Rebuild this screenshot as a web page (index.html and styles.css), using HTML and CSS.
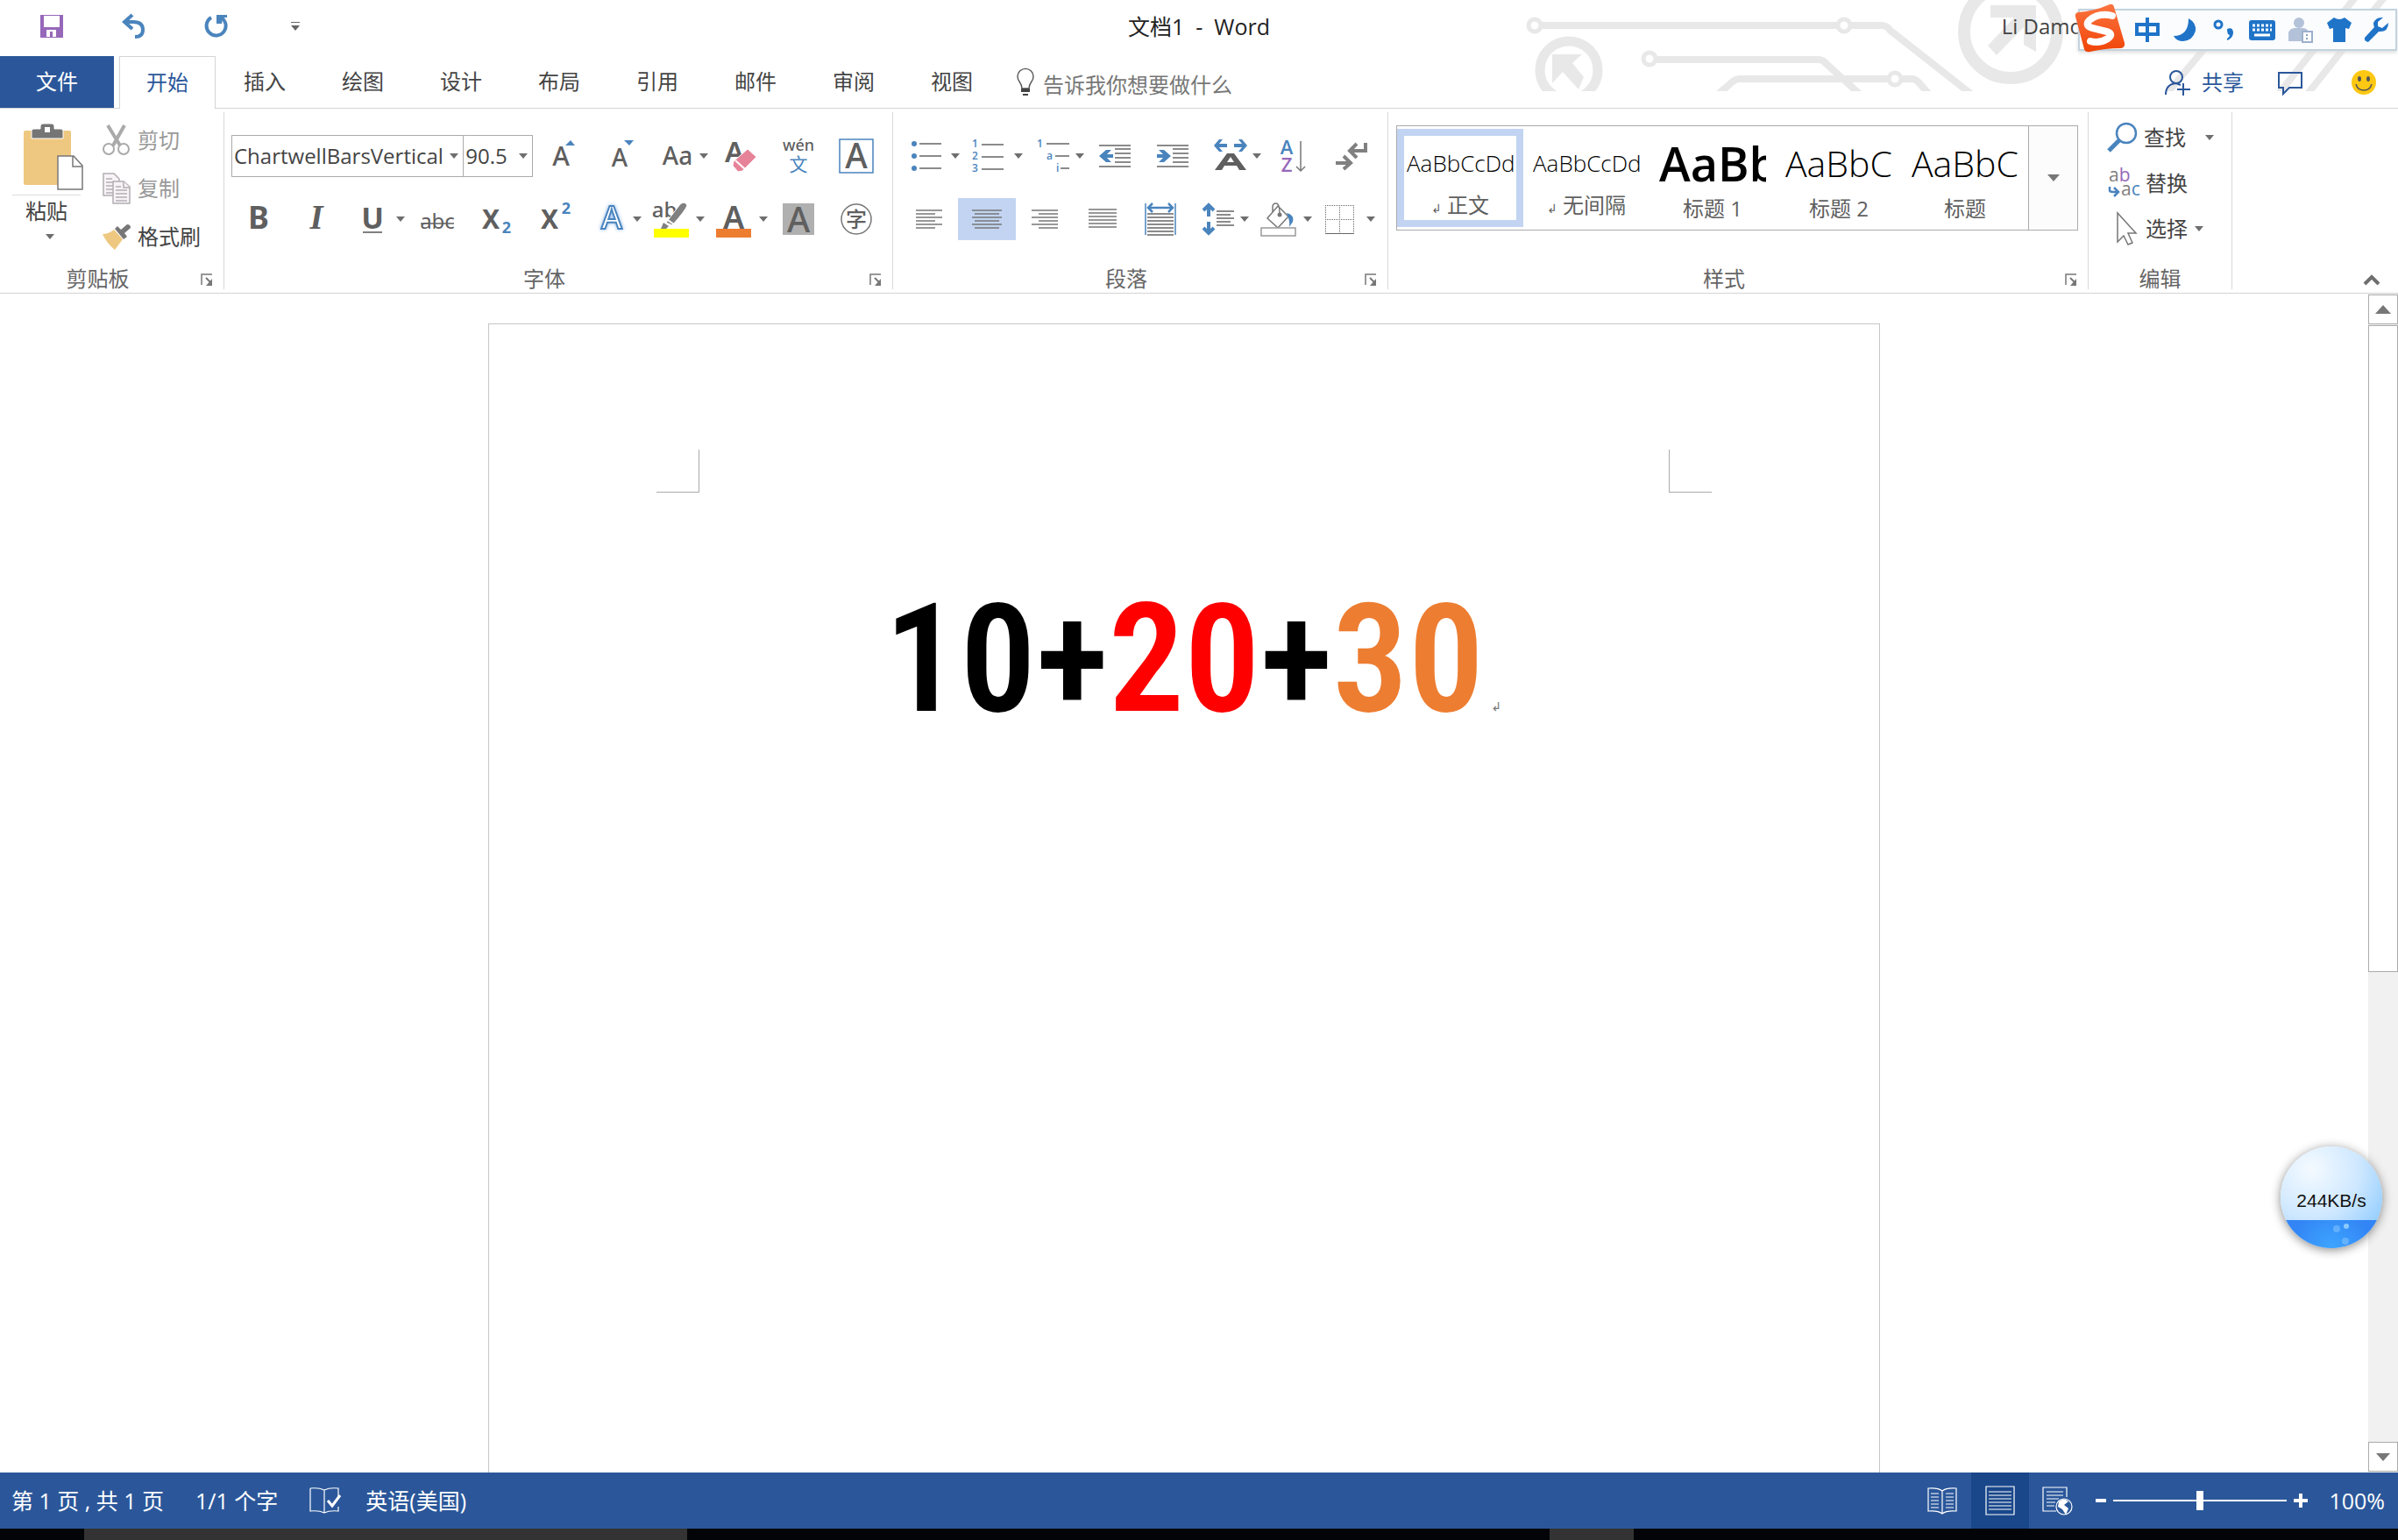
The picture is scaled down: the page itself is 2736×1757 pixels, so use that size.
FILE: index.html
```html
<!DOCTYPE html>
<html lang="zh-CN">
<head>
    <meta charset="UTF-8">
    <meta name="viewport" content="width=device-width, initial-scale=1.0">
    <title>文档1 - Word</title>
    <link rel="stylesheet" href="styles.css">
</head>
<body>
    <svg class="symbols" aria-hidden="true">
        <symbol id="down" viewBox="0 0 10 6"><path d="M0 0h10L5 6z" fill="#6e6e6e"/></symbol>
        <symbol id="launch" viewBox="0 0 14 14"><path d="M1 13V1h12" fill="none" stroke="#777" stroke-width="1.5"/><path d="M6 5l5 5" stroke="#777" stroke-width="2"/><path d="M13 6v8H6z" fill="#777"/></symbol>
    </svg>

    <header class="top">
        <svg class="circuit" width="1036" height="104" viewBox="1700 0 1036 104" aria-hidden="true">
            <g fill="none" stroke="#e8e8e8" stroke-width="8">
                <path d="M1758 29h338M2111 29h36q6 0 10 6l98 77"/>
                <circle cx="1751" cy="29" r="7" stroke-width="5"/>
                <circle cx="2104" cy="29" r="7" stroke-width="5"/>
                <path d="M1889 68h186q5 0 9 5l44 40M1955 112l22-19q4-3 8-3h169M2169 90h12q5 0 8 4l16 18"/>
                <circle cx="1882" cy="67" r="7" stroke-width="5"/>
                <circle cx="2162" cy="90" r="7" stroke-width="5"/>
                <circle cx="1790" cy="80" r="33" stroke-width="11"/>
                <circle cx="2294" cy="36" r="53" stroke-width="14"/>
                <path d="M2518 52l-50 60M2688-4l-92 116M2721-4l-92 116"/>
            </g>
            <path d="M1771 62h34l-11 10 13 16-6 14-18-20-12 13z" fill="#e8e8e8"/>
            <path d="M2271 6h52v53l-14-8V31l-31 32-10-11 30-32h-27z" fill="#e8e8e8"/>
        </svg>

        <div class="titlebar">
            <div class="quick">
                <button class="plain" aria-label="保存"><svg width="26" height="26" viewBox="0 0 26 26"><path d="M0 0h26v26H0z" fill="#9668b9"/><path d="M4 1h18v13H4zM7 17h11v8h-4v-6h-3v6H7z" fill="#fff"/></svg></button>
                <button class="plain" aria-label="撤消"><svg width="28" height="28" viewBox="0 0 28 28"><path d="M13 1L4 9l9 8M5 9h9q11 0 11 9 0 8-9 8" fill="none" stroke="#4a84bd" stroke-width="4"/></svg></button>
                <button class="plain" aria-label="重复"><svg width="28" height="28" viewBox="0 0 28 28"><path d="M9 4a11 11 0 1 0 9-1" fill="none" stroke="#4a84bd" stroke-width="4"/><path d="M15 1h12v3h-5l-1 7h-6z" fill="#4a84bd"/></svg></button>
                <button class="plain customize" aria-label="自定义快速访问工具栏"><svg width="10" height="10" viewBox="0 0 10 10"><path d="M0 0h10v1H0zM0 4h10L5 10z" fill="#666"/></svg></button>
            </div>
            <h1 class="title">文档1&nbsp; -&nbsp; Word</h1>
            <span class="user">Li Damo</span>
        </div>

        <nav class="tabs">
            <button class="tab file">文件</button>
            <button class="tab active">开始</button>
            <button class="tab">插入</button>
            <button class="tab">绘图</button>
            <button class="tab">设计</button>
            <button class="tab">布局</button>
            <button class="tab">引用</button>
            <button class="tab">邮件</button>
            <button class="tab">审阅</button>
            <button class="tab">视图</button>
            <label class="tell">
                <svg width="20" height="30" viewBox="0 0 20 30"><path d="M6 22q0-4-3-8a9 9 0 1 1 14 0q-3 4-3 8z" fill="none" stroke="#555" stroke-width="1.4"/><path d="M5 22h10v4H5zM7 28h6v2H7z" fill="#444"/></svg>
                <input type="text" placeholder="告诉我你想要做什么" aria-label="告诉我你想要做什么">
            </label>
            <div class="account">
                <button class="plain share"><svg width="30" height="30" viewBox="0 0 30 30"><g fill="none" stroke="#2b579a" stroke-width="2"><circle cx="13" cy="9" r="7"/><path d="M1 29q0-12 12-13l5 2M21 16v14M14 23h15"/></g></svg>共享</button>
                <button class="plain" aria-label="批注"><svg width="28" height="28" viewBox="0 0 28 28"><path d="M1 3h26v17H13l-7 7v-7H1z" fill="none" stroke="#2b579a" stroke-width="2"/></svg></button>
                <button class="plain" aria-label="反馈"><svg width="28" height="28" viewBox="0 0 28 28"><circle cx="14" cy="14" r="14" fill="#fdc813"/><ellipse cx="9" cy="10" rx="2" ry="3" fill="#555"/><ellipse cx="19" cy="10" rx="2" ry="3" fill="#555"/><path d="M5 16q2 7 9 7t9-7" fill="none" stroke="#555" stroke-width="1.5"/></svg></button>
            </div>
        </nav>

        <div class="ime">
            <svg class="ime-logo" width="58" height="56" viewBox="0 0 58 56"><defs><linearGradient id="fire" x1="0" y1="0" x2="0" y2="1"><stop offset="0" stop-color="#fb7440"/><stop offset="1" stop-color="#f04508"/></linearGradient></defs><path d="M4 10Q22 9 40 1q4-1 5 3l12 41q1 5-4 6-18 0-35 4-6 1-7-3L1 15q-1-4 3-5z" fill="url(#fire)"/><path d="M43 14Q28 10 17 19q-6 6 3 9l17 4q8 3 1 8-10 6-20 3" fill="none" stroke="#fff" stroke-width="8" stroke-linecap="round"/></svg>
            <svg width="30" height="30" viewBox="0 0 30 30"><path d="M3 9h24v11H3zM15 1v28" fill="none" stroke="#1f74c8" stroke-width="4"/></svg>
            <svg width="30" height="30" viewBox="0 0 30 30"><path d="M19 2q9 5 8 14-3 11-14 12Q5 28 2 22q17 0 17-20z" fill="#1f74c8"/></svg>
            <svg width="30" height="30" viewBox="0 0 30 30"><circle cx="9" cy="9" r="4" fill="none" stroke="#1f74c8" stroke-width="3"/><path d="M19 14q7-3 7 5-1 6-7 8v-2q3-2 3-4-3 0-3-7z" fill="#1f74c8"/></svg>
            <svg width="32" height="30" viewBox="0 0 32 30"><rect x="1" y="4" width="30" height="23" rx="3" fill="#1f74c8"/><path d="M5 10h22M5 15h22" stroke="#fff" stroke-width="3" stroke-dasharray="3 2"/><path d="M7 21h18" stroke="#fff" stroke-width="3"/></svg>
            <svg width="30" height="30" viewBox="0 0 30 30"><circle cx="13" cy="7" r="6" fill="#b3c2d9"/><path d="M1 28V18q2-5 8-5h8q6 0 7 5v10z" fill="#b3c2d9"/><path d="M17 17h11v12H17z" fill="#fff" stroke="#9cb0cc" stroke-width="2"/><path d="M22 20v2M22 24v2" stroke="#8aa0bf" stroke-width="2"/></svg>
            <svg width="30" height="30" viewBox="0 0 30 30"><path d="M9 1q6 4 12 0l8 6-3 7-4-1v16H8V13l-4 1-3-7z" fill="#1f74c8"/></svg>
            <svg width="30" height="30" viewBox="0 0 30 30"><path d="M28 7l-7 6-5-2 0-5 6-5q-8-1-11 6 0 4 1 5L1 24q-1 4 4 5L17 17q11 1 11-10z" fill="#1f74c8"/></svg>
        </div>
    </header>

    <section class="ribbon">
        <div class="group clipboard">
            <div class="group-body">
                <button class="plain paste">
                    <svg width="68" height="76" viewBox="0 0 68 76"><rect x="0" y="8" width="54" height="62" rx="2" fill="#eec880"/><path d="M9 17V8q0-2 3-2h7V3q0-3 3-3h10q3 0 3 3v3h7q3 0 3 2v9z" fill="#757575" stroke="#fff" stroke-width="1"/><path d="M24 4h6v6h-6z" fill="#fff"/><path d="M39 37h18l10 11v27H39z" fill="#fff" stroke="#777" stroke-width="1.5"/><path d="M56 37v12h11" fill="none" stroke="#777" stroke-width="1.5"/></svg>
                    <span class="paste-label">粘贴</span>
                    <svg width="10" height="6"><use href="#down"/></svg>
                </button>
                <div class="stack">
                    <button class="plain tool off"><svg width="32" height="36" viewBox="0 0 32 36"><path d="M6 1l14 23M25 1L12 24" stroke="#aaa" stroke-width="4"/><circle cx="7" cy="28" r="6" fill="none" stroke="#aaa" stroke-width="2"/><circle cx="24" cy="28" r="6" fill="none" stroke="#aaa" stroke-width="2"/></svg>剪切</button>
                    <button class="plain tool off"><svg width="32" height="36" viewBox="0 0 32 36"><g fill="#f7f3f7" stroke="#b3aeb3" stroke-width="1.5"><path d="M1 1h12l6 6v19H1z"/><path d="M4 7h7M4 11h8M4 15h8M4 19h8M4 23h8"/><path d="M12 10h12l7 6v19H12z"/><path d="M24 10v7h7M15 16h6M15 20h13M15 24h13M15 28h13M15 32h13"/></g></svg>复制</button>
                    <button class="plain tool"><svg width="32" height="36" viewBox="0 0 32 36"><path d="M0 15q7 0 13-5l10 11-9 12Q5 26 0 15z" fill="#eec880"/><path d="M14 9l3-3 4 4 7-6q4 0 4 4l-7 6 3 4-4 3z" fill="#777"/></svg>格式刷</button>
                </div>
            </div>
            <div class="group-foot"><span>剪贴板</span><button class="plain launcher" aria-label="剪贴板选项"><svg width="14" height="14"><use href="#launch"/></svg></button></div>
        </div>

        <div class="group font">
            <div class="rows">
                <div class="row">
                    <div class="combos">
                        <label class="combo family"><select aria-label="字体"><option>ChartwellBarsVertical</option></select><svg width="10" height="6"><use href="#down"/></svg></label>
                        <label class="combo size"><select aria-label="字号"><option>90.5</option></select><svg width="10" height="6"><use href="#down"/></svg></label>
                    </div>
                    <button class="ico" aria-label="增大字号"><svg width="40" height="40" viewBox="0 0 40 40"><text x="19" y="31" class="g" font-size="30" text-anchor="middle">A</text><path d="M24 8h11l-5-6z" fill="#4a84bd"/></svg></button>
                    <button class="ico" aria-label="减小字号"><svg width="40" height="40" viewBox="0 0 40 40"><text x="20" y="32" class="g" font-size="28" text-anchor="middle">A</text><path d="M25 2h11l-5 6z" fill="#4a84bd"/></svg></button>
                    <button class="ico wide" aria-label="更改大小写"><svg width="58" height="40" viewBox="0 0 58 40"><text x="33" y="30" class="g" font-size="28" text-anchor="middle">Aa</text></svg><svg width="10" height="6"><use href="#down"/></svg></button>
                    <button class="ico" aria-label="清除格式"><svg width="40" height="40" viewBox="0 0 40 40"><text x="13" y="27" class="g semi" font-size="33" text-anchor="middle">A</text><path d="M12 26L28 12l10 9-16 16-5 1-6-7z" fill="#e78399" stroke="#fff" stroke-width="1"/><path d="M14 25l11 10" stroke="#fff" stroke-width="2"/></svg></button>
                    <button class="ico" aria-label="拼音指南"><svg width="40" height="40" viewBox="0 0 40 40"><text x="20" y="14" class="g" font-size="18" text-anchor="middle">wén</text><text x="20" y="37" class="b" font-size="21" text-anchor="middle">文</text></svg></button>
                    <button class="ico" aria-label="字符边框"><svg width="40" height="40" viewBox="0 0 40 40"><path d="M1 1h38v38H1z" fill="none" stroke="#4a84bd" stroke-width="1.5"/><text x="20" y="34" class="g" font-size="39" text-anchor="middle">A</text></svg></button>
                </div>
                <div class="row">
                    <button class="ico" aria-label="加粗"><svg width="40" height="40" viewBox="0 0 40 40"><text x="20" y="31" class="g bold" font-size="36" text-anchor="middle">B</text></svg></button>
                    <button class="ico" aria-label="倾斜"><svg width="40" height="40" viewBox="0 0 40 40"><text x="20" y="31" class="g serif" font-size="39" text-anchor="middle">I</text></svg></button>
                    <button class="ico wide" aria-label="下划线"><svg width="58" height="40" viewBox="0 0 58 40"><text x="31" y="31" class="g bold" font-size="34" text-anchor="middle">U</text><path d="M20 35h22" stroke="#555" stroke-width="1.5"/></svg><svg width="10" height="6"><use href="#down"/></svg></button>
                    <button class="ico" aria-label="删除线"><svg width="40" height="40" viewBox="0 0 40 40"><text x="20" y="31" class="g light" font-size="24" text-anchor="middle">abc</text><path d="M1 25h38" stroke="#5f5f5f" stroke-width="1.5"/></svg></button>
                    <button class="ico" aria-label="下标"><svg width="40" height="40" viewBox="0 0 40 40"><text x="15" y="31" class="g bold" font-size="30" text-anchor="middle">X</text><text x="33" y="36" class="b bold" font-size="18" text-anchor="middle">2</text></svg></button>
                    <button class="ico" aria-label="上标"><svg width="40" height="40" viewBox="0 0 40 40"><text x="16" y="31" class="g bold" font-size="30" text-anchor="middle">X</text><text x="35" y="14" class="b bold" font-size="18" text-anchor="middle">2</text></svg></button>
                    <button class="ico wide" aria-label="文本效果"><svg width="58" height="40" viewBox="0 0 58 40"><text x="34" y="31" class="fx" font-size="36" text-anchor="middle">A</text></svg><svg width="10" height="6"><use href="#down"/></svg></button>
                    <button class="ico wide" aria-label="突出显示"><svg width="58" height="40" viewBox="0 0 58 40"><text x="22" y="18" class="g" font-size="24" text-anchor="middle">ab</text><path d="M24 24L40 3q5-4 8 1-1 5-17 23z" fill="#808080" stroke="#fff"/><path d="M26 21l7 5" stroke="#fff" stroke-width="2"/><path d="M21 24l6 4-3 3h-6z" fill="#808080"/><path d="M10 31h40v10H10z" fill="#ff0"/></svg><svg width="10" height="6"><use href="#down"/></svg></button>
                    <button class="ico wide" aria-label="字体颜色"><svg width="58" height="40" viewBox="0 0 58 40"><text x="29" y="31" class="g semi" font-size="36" text-anchor="middle">A</text><path d="M9 31h40v10H9z" fill="#ed7d31"/></svg><svg width="10" height="6"><use href="#down"/></svg></button>
                    <button class="ico" aria-label="字符底纹"><svg width="40" height="40" viewBox="0 0 40 40"><path d="M0 2h36v36H0z" fill="#b0b0b0"/><text x="18" y="35" class="g" font-size="40" text-anchor="middle">A</text></svg></button>
                    <button class="ico" aria-label="带圈字符"><svg width="40" height="40" viewBox="0 0 40 40"><circle cx="18" cy="20" r="17" fill="none" stroke="#777" stroke-width="1.5"/><text x="18" y="29" class="g" font-size="24" text-anchor="middle">字</text></svg></button>
                </div>
            </div>
            <div class="group-foot"><span>字体</span><button class="plain launcher" aria-label="字体选项"><svg width="14" height="14"><use href="#launch"/></svg></button></div>
        </div>

        <div class="group paragraph">
            <div class="rows">
                <div class="row">
                    <button class="ico wide" aria-label="项目符号"><svg width="58" height="40" viewBox="0 0 58 40"><g fill="#4a84bd"><circle cx="16" cy="6" r="3"/><circle cx="16" cy="20" r="3"/><circle cx="16" cy="34" r="3"/></g><path d="M22 6h25M22 20h25M22 34h25" stroke="#666" stroke-width="1.5"/></svg><svg width="10" height="6"><use href="#down"/></svg></button>
                    <button class="ico wide" aria-label="编号"><svg width="58" height="40" viewBox="0 0 58 40"><g class="b semi" font-size="12"><text x="10" y="10">1</text><text x="10" y="24">2</text><text x="10" y="38">3</text></g><path d="M21 7h25M21 21h25M21 35h25" stroke="#666" stroke-width="1.5"/></svg><svg width="10" height="6"><use href="#down"/></svg></button>
                    <button class="ico wide multi" aria-label="多级列表"><svg width="56" height="40" viewBox="0 0 56 40"><g class="b semi" font-size="12"><text x="12" y="10">1</text><text x="23" y="24">a</text><text x="34" y="38">i</text></g><path d="M23 6h26M33 20h16M39 34h10" stroke="#666" stroke-width="1.5"/></svg><svg width="10" height="6"><use href="#down"/></svg></button>
                    <button class="ico" aria-label="减少缩进量"><svg width="40" height="40" viewBox="0 0 40 40"><path d="M2 8h36M20 12h18M20 17h18M20 22h18M20 27h18M2 32h36" stroke="#666" stroke-width="1.5"/><path d="M2 20l8-7h6l-5 5h7v4h-7l5 5h-6z" fill="#4a84bd"/></svg></button>
                    <button class="ico" aria-label="增加缩进量"><svg width="40" height="40" viewBox="0 0 40 40"><path d="M2 8h36M20 12h18M20 17h18M20 22h18M20 27h18M2 32h36" stroke="#666" stroke-width="1.5"/><path d="M18 20l-8-7H4l5 5H2v4h7l-5 5h6z" fill="#4a84bd"/></svg></button>
                    <button class="ico wide" aria-label="中文版式"><svg width="58" height="40" viewBox="0 0 58 40"><path d="M24 1h-4l-6 7 6 7h4l-4-5h9V6h-9zM42 1h4l6 7-6 7h-4l4-5h-9V6h9z" fill="#4a84bd"/><path d="M15 36L29 17h8l14 19h-8l-3-5H26l-3 5zM29 27h8l-4-6z" fill="#5f5f5f"/></svg><svg width="10" height="6"><use href="#down"/></svg></button>
                    <button class="ico" aria-label="排序"><svg width="40" height="40" viewBox="0 0 40 40"><text x="12" y="18" class="b semi" font-size="22" text-anchor="middle">A</text><text x="12" y="38" class="p semi" font-size="22" text-anchor="middle">Z</text><path d="M28 3v34M23 32l5 5 5-5" fill="none" stroke="#777" stroke-width="1.5"/></svg></button>
                    <button class="ico" aria-label="显示编辑标记"><svg width="40" height="40" viewBox="0 0 40 40"><path d="M36 5v9H20M26 6l-8 8 8 8M2 28h16M11 20l8 8-8 7" fill="none" stroke="#808080" stroke-width="4"/></svg></button>
                </div>
                <div class="row">
                    <button class="ico" aria-label="左对齐"><svg width="40" height="40" viewBox="0 0 40 40"><path d="M5 10h30M5 14h22M5 18h30M5 22h22M5 26h30M5 30h22" stroke="#777" stroke-width="1.5"/></svg></button>
                    <button class="ico on" aria-label="居中"><svg width="40" height="40" viewBox="0 0 40 40"><path d="M3 10h34M6 14h28M3 18h34M6 22h28M3 26h34M6 30h28" stroke="#777" stroke-width="1.5"/></svg></button>
                    <button class="ico" aria-label="右对齐"><svg width="40" height="40" viewBox="0 0 40 40"><path d="M5 10h30M13 14h22M5 18h30M13 22h22M5 26h30M13 30h22" stroke="#777" stroke-width="1.5"/></svg></button>
                    <button class="ico" aria-label="两端对齐"><svg width="40" height="40" viewBox="0 0 40 40"><path d="M4 9h32M4 13h32M4 17h32M4 21h32M4 25h32M4 29h32" stroke="#777" stroke-width="1.5"/></svg></button>
                    <button class="ico" aria-label="分散对齐"><svg width="40" height="40" viewBox="0 0 40 40"><path d="M3 2v36M37 2v36" stroke="#4a84bd" stroke-width="1.5"/><path d="M6 7h28M11 2L6 7l5 5M29 2l5 5-5 5" fill="none" stroke="#4a84bd" stroke-width="2.5"/><path d="M5 14h30M5 18h30M5 22h30M5 26h30M5 30h30M5 34h30M5 38h30" stroke="#666" stroke-width="1.5"/></svg></button>
                    <button class="ico wide" aria-label="行距"><svg width="58" height="40" viewBox="0 0 58 40"><path d="M22 4v13M16 10l6-6 6 6M22 23v13M16 30l6 6 6-6" fill="none" stroke="#4a84bd" stroke-width="4"/><path d="M31 11h20M31 15h16M31 19h20M31 23h16M31 27h20" stroke="#666" stroke-width="1.5"/></svg><svg width="10" height="6"><use href="#down"/></svg></button>
                    <button class="ico wide" aria-label="底纹"><svg width="58" height="40" viewBox="0 0 58 40"><path d="M29 5L41 17 29 30 17 19z" fill="#fff" stroke="#777" stroke-width="1.5"/><path d="M23 12V6q0-4 4-4 4 0 4 12" fill="none" stroke="#777" stroke-width="1.5"/><circle cx="31" cy="15" r="2.5" fill="#777"/><path d="M39 13q9 2 7 10l-4 6q1-7-3-16z" fill="#4a84bd"/><path d="M10 30h39v9H10z" fill="#fff" stroke="#999" stroke-width="1.5"/></svg><svg width="10" height="6"><use href="#down"/></svg></button>
                    <button class="ico wide" aria-label="边框"><svg width="58" height="40" viewBox="0 0 58 40"><path d="M11 4.500h34M11 20.500h34M11.500 4v32M27.500 4v32M43.500 4v32" stroke="#666" stroke-width="1" stroke-dasharray="1 1"/><path d="M11 36.500h33" stroke="#666"/></svg><svg width="10" height="6"><use href="#down"/></svg></button>
                </div>
            </div>
            <div class="group-foot"><span>段落</span><button class="plain launcher" aria-label="段落设置"><svg width="14" height="14"><use href="#launch"/></svg></button></div>
        </div>

        <div class="group styles">
            <div class="group-body">
                <div class="gallery">
                    <button class="style chosen"><span class="sample">AaBbCcDd</span><span class="name"><small>↲</small> 正文</span></button>
                    <button class="style"><span class="sample">AaBbCcDd</span><span class="name"><small>↲</small> 无间隔</span></button>
                    <button class="style"><span class="sample h1">AaBb</span><span class="name">标题 1</span></button>
                    <button class="style"><span class="sample h2">AaBbC</span><span class="name">标题 2</span></button>
                    <button class="style"><span class="sample h2">AaBbC</span><span class="name">标题</span></button>
                    <button class="more" aria-label="其他样式"><svg width="14" height="8" viewBox="0 0 10 6" preserveAspectRatio="none"><path d="M0 0h10L5 6z" fill="#777"/></svg></button>
                </div>
            </div>
            <div class="group-foot"><span>样式</span><button class="plain launcher" aria-label="样式窗格"><svg width="14" height="14"><use href="#launch"/></svg></button></div>
        </div>

        <div class="group edit">
            <div class="stack">
                <button class="plain tool find"><svg width="36" height="36" viewBox="0 0 36 36"><circle cx="22" cy="13" r="11" fill="none" stroke="#4a84bd" stroke-width="2.5"/><path d="M14 21L2 33" stroke="#4a84bd" stroke-width="5"/></svg>查找<svg class="far" width="10" height="6"><use href="#down"/></svg></button>
                <button class="plain tool"><svg width="36" height="36" viewBox="0 0 36 36"><text x="2" y="16" class="gray" font-size="21">a<tspan class="p">b</tspan></text><text x="16" y="32" class="gray" font-size="21">a<tspan class="b">c</tspan></text><path d="M3 22v4q0 2 4 2h5M8 23l5 5-5 5" fill="none" stroke="#4a84bd" stroke-width="2.5"/></svg>替换</button>
                <button class="plain tool"><svg width="36" height="38" viewBox="0 0 36 38"><path d="M12 1v33l7-7 5 10 5-2-5-11h9z" fill="#fff" stroke="#777" stroke-width="1.5"/></svg>选择<svg class="near" width="10" height="6"><use href="#down"/></svg></button>
            </div>
            <div class="group-foot"><span>编辑</span></div>
        </div>

        <button class="plain collapse" aria-label="折叠功能区"><svg width="18" height="12" viewBox="0 0 18 12"><path d="M1 11l8-8 8 8" fill="none" stroke="#6e6e6e" stroke-width="4"/></svg></button>
    </section>

    <main class="workspace">
        <div class="canvas">
            <article class="page">
                <div class="margins"><i class="corner left"></i><i class="corner right"></i></div>
                <p class="chart">10+<span class="red">20</span>+<span class="orange">30</span><span class="mark">↲</span></p>
            </article>
        </div>
        <div class="scrollbar">
            <button class="scroll-btn" aria-label="向上滚动"><svg width="18" height="10" viewBox="0 0 18 10"><path d="M0 10h18L9 0z" fill="#777"/></svg></button>
            <div class="track"><div class="thumb"></div></div>
            <button class="scroll-btn" aria-label="向下滚动"><svg width="16" height="9" viewBox="0 0 18 10"><path d="M0 0h18L9 10z" fill="#777"/></svg></button>
        </div>
    </main>

    <div class="speed"><span>244KB/s</span><svg width="116" height="32" viewBox="0 0 116 32"><g fill="#8ccaff"><circle cx="64" cy="10" r="4" opacity=".5"/><circle cx="75" cy="7" r="3"/><circle cx="74" cy="24" r="4" opacity=".5"/></g></svg></div>

    <footer class="status">
        <span class="pages">第 1 页 , 共 1 页</span>
        <span class="words">1/1 个字</span>
        <svg class="proof" width="36" height="30" viewBox="0 0 36 30"><path d="M1 1q10-1 16 2 6-3 16-2v9M33 22v5q-10-1-16 2-6-3-16-2V1M17 3v26" fill="none" stroke="#fff" stroke-width="1.2"/><path d="M21 15l5 6 9-12" fill="none" stroke="#fff" stroke-width="3"/></svg>
        <span>英语(美国)</span>
        <div class="views">
            <button class="view" aria-label="阅读视图"><svg width="34" height="32" viewBox="0 0 34 32"><path d="M1 2q11-1 16 3 5-4 16-3v26q-11-1-16 3-5-4-16-3zM17 5v26M4 8h9M4 12h9M4 16h9M4 20h9M4 24h9M21 8h9M21 12h9M21 16h9M21 20h9M21 24h9" fill="none" stroke="#fff" stroke-width="1.2"/></svg></button>
            <button class="view current" aria-label="页面视图"><svg width="34" height="34" viewBox="0 0 34 34"><path d="M1 1h32v32H1zM4 7h26M4 11h26M4 15h26M4 19h26M4 23h26M4 27h26" fill="none" stroke="#fff" stroke-width="1.2"/></svg></button>
            <button class="view" aria-label="Web 版式视图"><svg width="36" height="34" viewBox="0 0 36 34"><path d="M16 29H1V2h27v11M5 7h19M5 11h19M5 15h14M5 19h10M5 23h9" fill="none" stroke="#fff" stroke-width="1.2"/><circle cx="25" cy="24" r="9" fill="none" stroke="#fff" stroke-width="1.2"/><path d="M19 18q6-5 11 0l-5 4 5 4-3 7-4-6-5-3z" fill="#fff"/></svg></button>
        </div>
        <button class="zoom-btn" aria-label="缩小"><svg width="16" height="16" viewBox="0 0 16 16"><path d="M2 8h12" stroke="#fff" stroke-width="4"/></svg></button>
        <input class="zoom" type="range" min="0" max="100" value="50" aria-label="显示比例">
        <button class="zoom-btn" aria-label="放大"><svg width="16" height="16" viewBox="0 0 16 16"><path d="M0 8h16M8 0v16" stroke="#fff" stroke-width="4"/></svg></button>
        <span class="percent">100%</span>
    </footer>
    <div class="taskbar"><i class="task first"></i><i class="task second"></i></div>
</body>
</html>
```
FILE: styles.css
```css
* {
    box-sizing: border-box;
}
body {
    margin: 0;
    height: 100vh;
    display: flex;
    flex-direction: column;
    overflow: hidden;
    background: #fff;
    color: #444;
    font-family: "Open Sans", "Noto Sans CJK SC", sans-serif;
    font-size: 24px;
    line-height: 32px;
}
button, input, select {
    font: inherit;
    color: inherit;
    margin: 0;
    padding: 0;
    border: 0;
    background: none;
}
svg {
    display: block;
    flex: none;
    overflow: visible;
}
.symbols {
    position: absolute;
    width: 0;
    height: 0;
}
.plain {
    display: flex;
    align-items: center;
}

/* title bar and tabs */
.top {
    position: relative;
    border-bottom: 1px solid #d4d4d4;
}
.circuit {
    position: absolute;
    right: 0;
    top: 0;
    overflow: hidden;
}
.titlebar {
    position: relative;
    height: 64px;
    padding-bottom: 4px;
    display: flex;
    align-items: center;
    justify-content: center;
}
.quick {
    position: absolute;
    left: 46px;
    display: flex;
    align-items: center;
    gap: 66px;
}
.customize {
    margin-left: 6px;
}
.title {
    margin: 0;
    font-size: 25px;
    font-weight: 400;
    color: #222;
}
.user {
    position: absolute;
    right: 360px;
}
.tabs {
    position: relative;
    height: 59px;
    display: flex;
    align-items: stretch;
}
.tab {
    width: 112px;
    padding-bottom: 1px;
}
.tab.file {
    width: 130px;
    margin-right: 6px;
    background: #2b579a;
    color: #fff;
}
.tab.active {
    width: 110px;
    margin-bottom: -1px;
    background: #fff;
    border: 1px solid #d4d4d4;
    border-bottom: 0;
    color: #2b579a;
}
.tell {
    display: flex;
    align-items: center;
    gap: 10px;
    margin-left: 18px;
}
.tell input {
    width: 240px;
    padding-top: 6px;
}
.tell input::placeholder {
    color: #777;
    opacity: 1;
}
.account {
    display: flex;
    align-items: center;
    margin-left: auto;
    padding-right: 25px;
    color: #2b579a;
}
.share {
    gap: 12px;
    margin-right: 39px;
}
.account .plain:last-child {
    margin-left: 56px;
}
.ime {
    position: absolute;
    top: 10px;
    right: 1px;
    width: 364px;
    height: 48px;
    padding: 0 6px 0 62px;
    display: flex;
    align-items: center;
    justify-content: space-between;
    background: #fafcfe;
    border: 2px solid #c3d3de;
    box-shadow: 0 2px 4px #ddd;
}
.ime-logo {
    position: absolute;
    left: -6px;
    top: -8px;
}

/* ribbon */
.ribbon {
    display: flex;
    padding: 4px 0;
    border-bottom: 1px solid #d4d4d4;
}
.group {
    height: 202px;
    display: flex;
    flex-direction: column;
    border-right: 1px solid #d9d9d9;
}
.group-body {
    display: flex;
}
.group-foot {
    position: relative;
    margin-top: auto;
    height: 24px;
    line-height: 24px;
    text-align: center;
    color: #666;
}
.launcher {
    position: absolute;
    right: 12px;
    bottom: 4px;
}
.clipboard {
    width: 256px;
}
.font {
    width: 763px;
}
.paragraph {
    width: 565px;
}
.styles {
    width: 799px;
}
.clipboard .group-foot, .font .group-foot, .paragraph .group-foot, .styles .group-foot {
    padding-right: 32px;
}
.edit {
    width: 164px;
}
.paste {
    flex-direction: column;
    width: 94px;
    margin-left: 12px;
    padding-top: 13px;
}
.paste svg:first-child {
    margin-left: 4px;
}
.paste-label {
    width: 78px;
    margin: 5px 12px 10px 0;
    padding-top: 2px;
    border-top: 1px solid #ddd;
}
.paste svg:last-child {
    margin-right: 4px;
}
.stack {
    display: flex;
    flex-direction: column;
}
.tool {
    height: 55px;
    gap: 8px;
}
.off {
    color: #999;
}
.clipboard .stack {
    padding: 4px 0 0 11px;
}
.edit .stack {
    padding: 3px 0 0 21px;
}
.edit .tool {
    height: 52px;
}
.edit .tool.find {
    gap: 6px;
}
.far {
    margin-left: 16px;
}
.rows {
    display: flex;
    flex-direction: column;
    gap: 24px;
    padding: 26px 0 0 6px;
}
.paragraph .rows {
    padding-left: 8px;
}
.row {
    display: flex;
    height: 48px;
}
.combos {
    display: flex;
    width: 344px;
    margin-left: 2px;
}
.combo {
    position: relative;
    border: 1px solid #ababab;
}
.combo select {
    width: 100%;
    height: 46px;
    padding-left: 2px;
    appearance: none;
    background: #fff;
}
.combo svg {
    position: absolute;
    right: 5px;
    top: 20px;
}
.family {
    width: 266px;
    margin-right: -1px;
}
.size {
    width: 80px;
}
.ico {
    width: 66px;
    height: 48px;
    display: flex;
    align-items: center;
    justify-content: center;
}
.ico.wide {
    width: 72px;
    justify-content: flex-start;
}
.ico.multi {
    width: 68px;
}
.ico.on {
    background: #c2d4f2;
}
.g {
    fill: #5f5f5f;
    font-family: "Noto Sans", "Noto Sans CJK SC", sans-serif;
    font-weight: 500;
}
.b {
    fill: #4a84bd;
}
.p {
    fill: #9668b9;
}
.gray {
    fill: #808080;
    font-weight: 500;
}
.bold {
    font-weight: 700;
}
.semi {
    font-weight: 600;
}
.light {
    font-weight: 400;
}
.serif {
    font-family: "Liberation Serif", serif;
    font-style: italic;
    font-weight: 700;
}
.fx {
    fill: #fff;
    stroke: #4a84bd;
    stroke-width: 2px;
    font-weight: 600;
    filter: drop-shadow(0 0 2px #8cb8e8);
}

/* style gallery */
.gallery {
    display: flex;
    height: 120px;
    margin: 15px 0 0 9px;
    border: 1px solid #ababab;
}
.style {
    width: 144px;
    margin: 3px 0;
    padding: 0;
    border: 8px solid transparent;
    display: flex;
    flex-direction: column;
    align-items: center;
}
.style.chosen {
    border-color: #c2d4f2;
}
.sample {
    width: 122px;
    height: 72px;
    overflow: hidden;
    white-space: nowrap;
    text-align: left;
    font-size: 26px;
    font-weight: 300;
    line-height: 62px;
    color: #000;
}
.sample.h1 {
    font-size: 54px;
    font-weight: 600;
}
.sample.h2 {
    font-size: 41px;
}
.name {
    white-space: nowrap;
    line-height: 26px;
    color: #5f5f5f;
}
.name small {
    font-size: 14px;
}
.more {
    flex: 1;
    width: 56px;
    border-left: 1px solid #ababab;
    background: #fcfcfc;
    display: flex;
    align-items: center;
    justify-content: center;
}
.collapse {
    align-self: flex-end;
    margin: 0 21px 5px auto;
}

/* document */
.workspace {
    flex: 1;
    min-height: 0;
    display: flex;
}
.canvas {
    flex: 1;
    display: flex;
    justify-content: center;
    padding-top: 34px;
}
.page {
    width: 1588px;
    border: 1px solid #c6c6c6;
    border-bottom: 0;
    padding: 143px 191px 0;
}
.margins {
    display: flex;
    justify-content: space-between;
}
.corner {
    width: 49px;
    height: 49px;
    border-bottom: 1px solid #aaa;
}
.corner.left {
    border-right: 1px solid #aaa;
}
.corner.right {
    border-left: 1px solid #aaa;
}
.chart {
    margin: 70px 0 0;
    text-align: center;
    font-family: "Roboto Condensed", "Liberation Sans", sans-serif;
    font-size: 172px;
    font-weight: 600;
    line-height: 240px;
    color: #000;
}
.red {
    color: #f00;
}
.orange {
    color: #ed7d31;
}
.mark {
    margin: 0 -20px 0 8px;
    font-family: "DejaVu Sans", sans-serif;
    font-size: 14px;
    font-weight: 400;
    color: #777;
}
.scrollbar {
    width: 34px;
    display: flex;
    flex-direction: column;
    background: #f1f1f1;
}
.scroll-btn {
    height: 34px;
    margin: 1px 0;
    border: 1px solid #ababab;
    background: #fff;
    display: flex;
    align-items: center;
    justify-content: center;
}
.track {
    flex: 1;
}
.thumb {
    height: 58%;
    background: #fff;
    border: 1px solid #ababab;
}
.speed {
    position: absolute;
    right: 18px;
    bottom: 333px;
    width: 116px;
    height: 116px;
    border-radius: 50%;
    overflow: hidden;
    display: flex;
    flex-direction: column;
    align-items: center;
    background: radial-gradient(circle at 30% 22%, #f4faff, #cfe8ff 45%, #8ccaff 85%);
    box-shadow: 0 2px 12px #888;
    color: #111;
    font-family: "Liberation Sans", sans-serif;
    font-size: 21px;
}
.speed span {
    height: 84px;
    padding-top: 46px;
}
.speed svg {
    background: radial-gradient(circle at 50% 100%, #3da5ff, #3385f5 70%);
}

/* status bar */
.status {
    height: 64px;
    display: flex;
    align-items: center;
    padding: 0 15px 0 13px;
    background: #2b579a;
    color: #fff;
    font-size: 25px;
    white-space: nowrap;
}
.words {
    margin-left: 36px;
}
.proof {
    margin: 0 28px 0 36px;
}
.views {
    display: flex;
    align-self: stretch;
    margin-left: auto;
}
.view {
    width: 66px;
    display: flex;
    align-items: center;
    justify-content: center;
}
.view.current {
    background: #19478a;
}
.zoom-btn {
    width: 16px;
    margin-left: 6px;
}
.zoom {
    appearance: none;
    width: 198px;
    height: 22px;
    margin: 0 2px 0 6px;
    background: linear-gradient(#fff, #fff) center / 100% 2px no-repeat;
}
.zoom::-webkit-slider-thumb {
    appearance: none;
    width: 8px;
    height: 22px;
    background: #fff;
}
.views + .zoom-btn {
    margin-left: 8px;
}
.percent {
    margin-left: 24px;
}
.taskbar {
    height: 13px;
    display: flex;
    background: #020408;
}
.task {
    background: #333;
}
.task.first {
    width: 688px;
    margin-left: 96px;
}
.task.second {
    width: 96px;
    margin-left: 984px;
}
```
